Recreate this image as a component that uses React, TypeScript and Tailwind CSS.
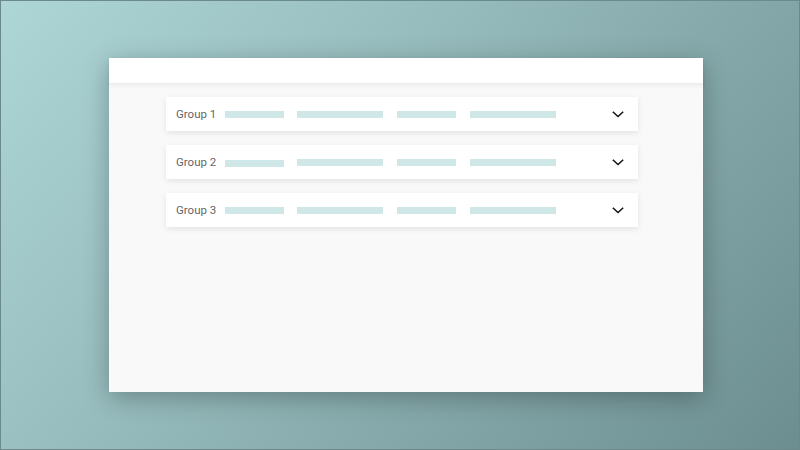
import React from "react";

function Chevron() {
  return (
    <svg width="12" height="7" viewBox="0 0 12 7" fill="none">
      <path d="M0.8 0.8 L6 5.6 L11.2 0.8" stroke="#111" strokeWidth="1.5" />
    </svg>
  );
}

function Row({ label, firstLow }: { label: string; firstLow?: boolean }) {
  return (
    <div className="flex h-[34px] w-[472px] items-center bg-white pl-[10px] pr-[14px] shadow-[0_2px_6px_rgba(0,0,0,0.09)]">
      <span className="mt-[1px] w-[49px] text-[11.5px] font-normal text-[#666] [font-family:Roboto,'Liberation_Sans',sans-serif]">
        {label}
      </span>
      <div className={`h-[7px] w-[59px] bg-[#d0e7e8] ${firstLow ? "mt-[3px]" : ""}`} />
      <div className="ml-[13px] h-[7px] w-[86px] bg-[#d0e7e8]" />
      <div className="ml-[14px] h-[7px] w-[59px] bg-[#d0e7e8]" />
      <div className="ml-[14px] h-[7px] w-[86px] bg-[#d0e7e8]" />
      <div className="ml-auto flex items-center">
        <Chevron />
      </div>
    </div>
  );
}

export default function App() {
  return (
    <div className="h-[450px] w-[800px] overflow-hidden border border-[#6a8a8c] bg-[linear-gradient(130deg,#aed6d7_0%,#96bbbc_40%,#6c8e90_100%)] pl-[108px] pt-[57px]">
      <div className="flex h-[334px] w-[594px] flex-col bg-[#f9f9f9] shadow-[0_6px_24px_rgba(0,0,0,0.28)]">
        <div className="relative z-10 h-[25px] bg-white shadow-[0_2px_5px_rgba(0,0,0,0.07)]" />
        <div className="flex flex-col gap-[14px] pl-[57px] pt-[14px]">
          <Row label="Group 1" />
          <Row label="Group 2" firstLow />
          <Row label="Group 3" />
        </div>
      </div>
    </div>
  );
}
